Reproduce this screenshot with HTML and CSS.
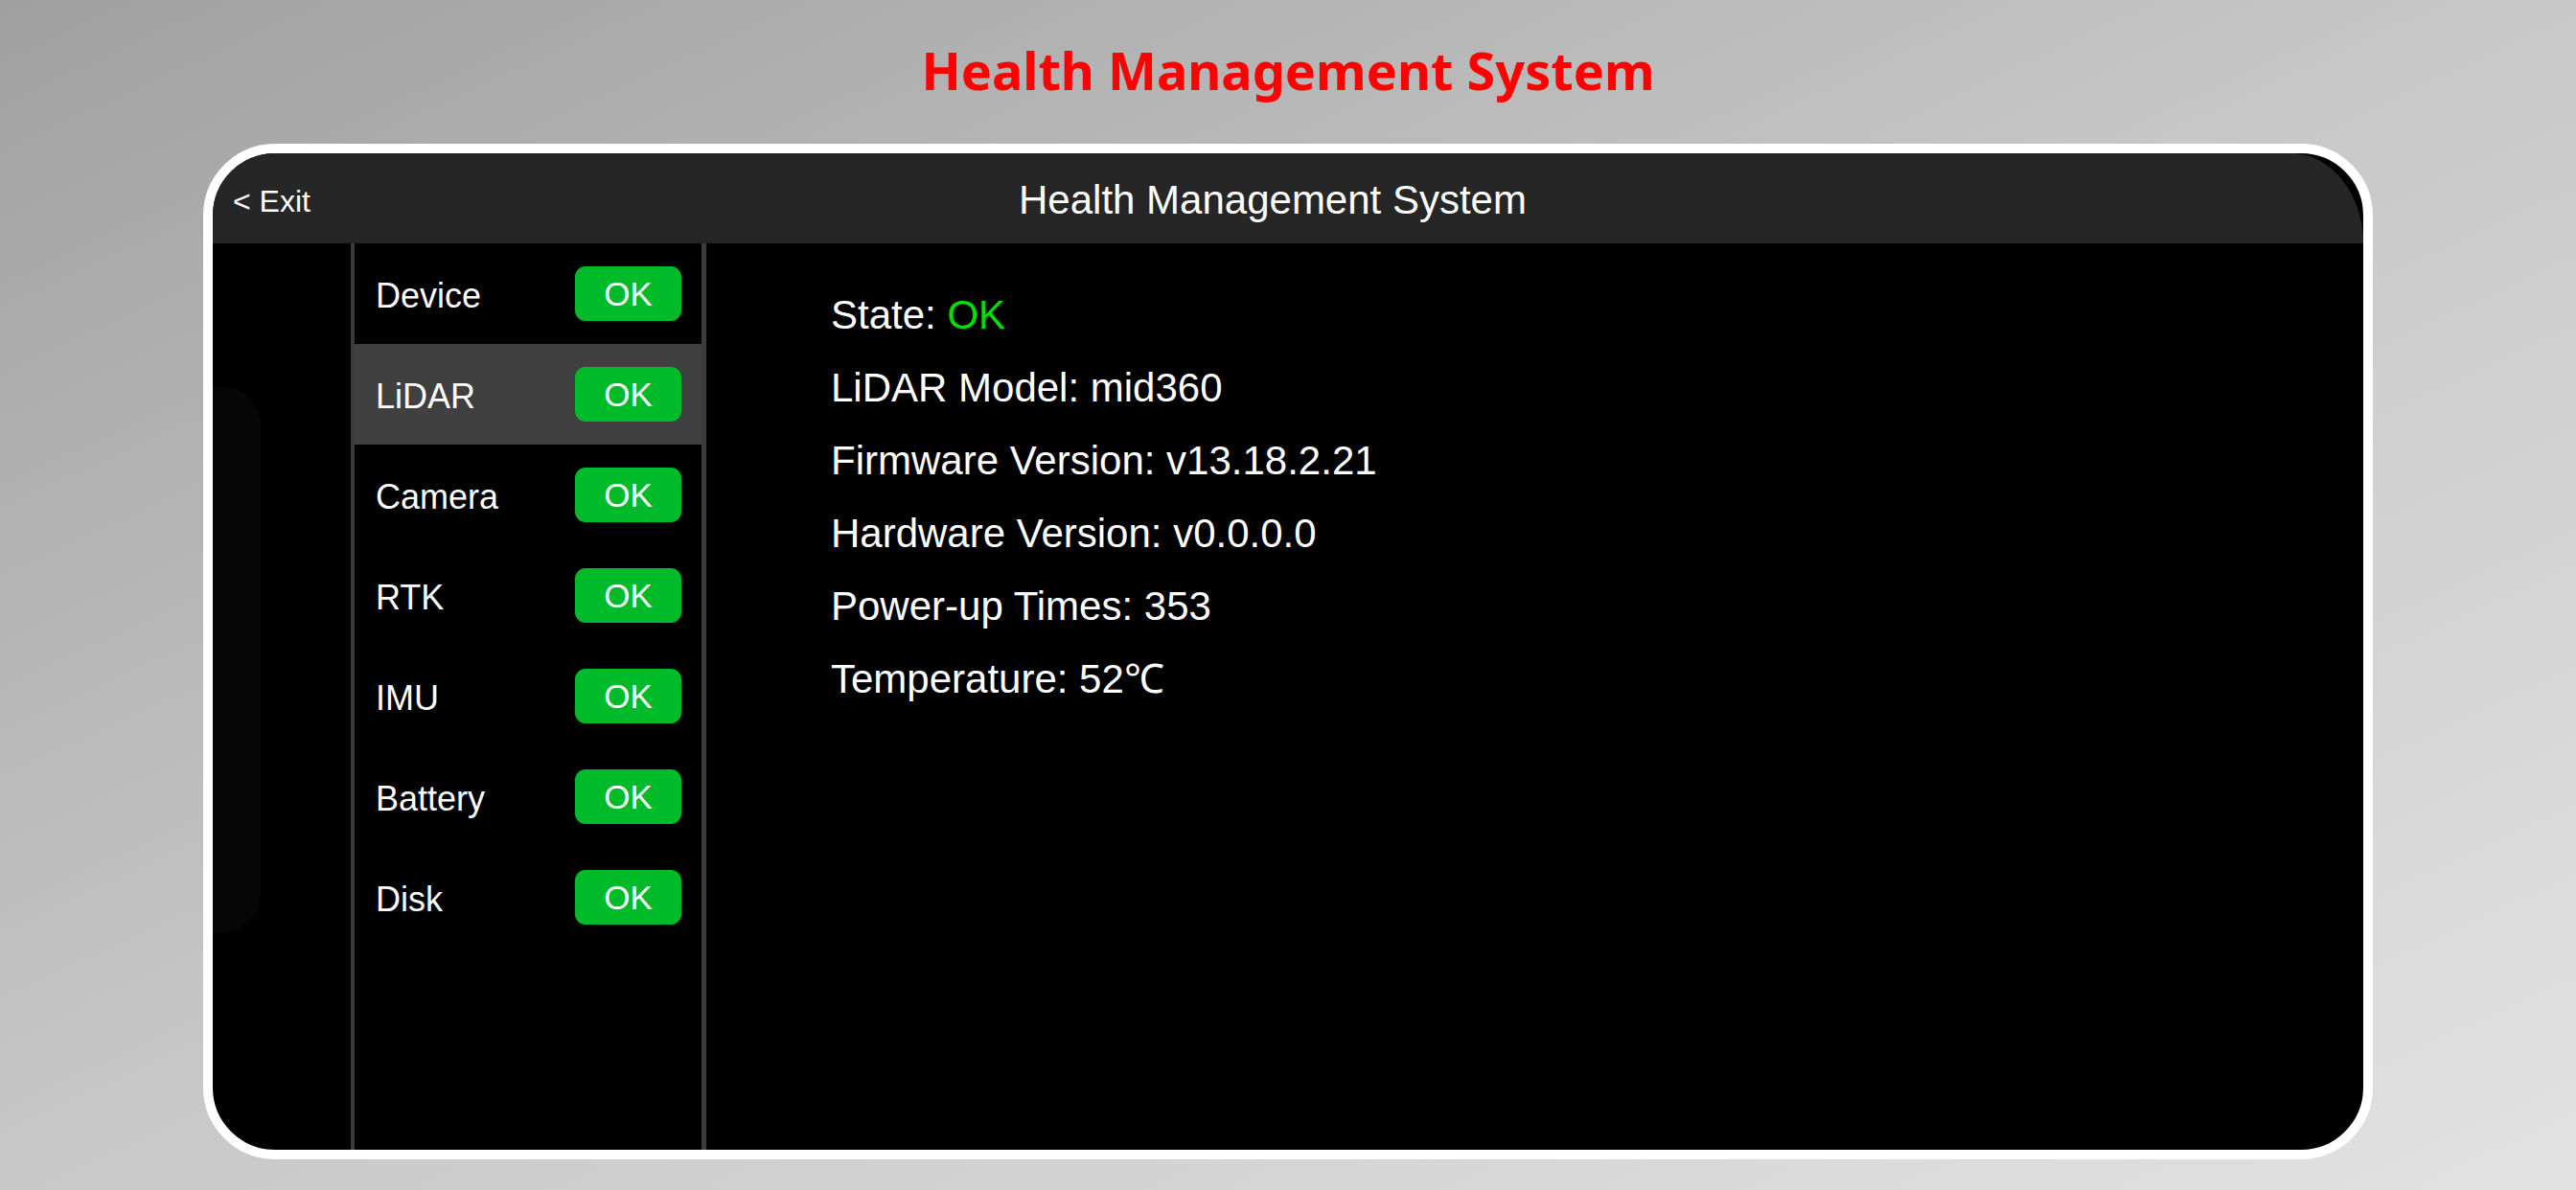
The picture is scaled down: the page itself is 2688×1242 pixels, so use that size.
FILE: index.html
```html
<!DOCTYPE html>
<html lang="en">
  <head>
    <meta charset="UTF-8" />
    <meta name="viewport" content="width=device-width, initial-scale=1.0" />
    <title>Health Management System</title>
    <link rel="stylesheet" href="styles.css">
  </head>
  <body>
    <h1 class="page-title">Health Management System</h1>

    <div class="device">
      <div class="topbar">
        <span class="exit">&lt; Exit</span>
        <span class="topbar-title">Health Management System</span>
      </div>

      <div class="screen">
        <div class="edge-shade"></div>
        <div class="gutter"></div>

        <ul class="modules">
          <li class="module"><span>Device</span><span class="badge">OK</span></li>
          <li class="module active"><span>LiDAR</span><span class="badge">OK</span></li>
          <li class="module"><span>Camera</span><span class="badge">OK</span></li>
          <li class="module"><span>RTK</span><span class="badge">OK</span></li>
          <li class="module"><span>IMU</span><span class="badge">OK</span></li>
          <li class="module"><span>Battery</span><span class="badge">OK</span></li>
          <li class="module"><span>Disk</span><span class="badge">OK</span></li>
        </ul>

        <div class="details">
          <p>State: <span class="ok">OK</span></p>
          <p>LiDAR Model: mid360</p>
          <p>Firmware Version: v13.18.2.21</p>
          <p>Hardware Version: v0.0.0.0</p>
          <p>Power-up Times: 353</p>
          <p>Temperature: 52℃</p>
        </div>
      </div>
    </div>
  </body>
</html>
```

FILE: styles.css
```css
* {
  margin: 0;
  padding: 0;
  box-sizing: border-box;
}

body {
  width: 2688px;
  height: 1242px;
  overflow: hidden;
  font-family: "Liberation Sans", Arial, sans-serif;
  background: linear-gradient(to bottom right, #a0a0a0 0%, #c8c8c8 50%, #e2e2e2 100%);
}

.page-title {
  height: 150px;
  padding-top: 38px;
  text-align: center;
  font-family: "Noto Sans", "Open Sans", sans-serif;
  font-size: 54px;
  line-height: 70px;
  font-weight: 700;
  color: #ff0000;
}

.device {
  width: 2264px;
  height: 1060px;
  margin: 0 auto;
  border: 10px solid #ffffff;
  border-radius: 75px;
  background: #000;
  overflow: hidden;
  display: flex;
  flex-direction: column;
}

.topbar {
  height: 94px;
  flex-shrink: 0;
  display: flex;
  align-items: center;
  position: relative;
  padding-top: 4px;
  background: #262626;
  border-top-right-radius: 80px 100px;
  color: #fff;
}

.exit {
  position: absolute;
  left: 21px;
  top: 32px;
  font-size: 32px;
  line-height: 36px;
}

.topbar-title {
  flex: 1;
  text-align: center;
  padding-right: 32px;
  font-size: 42px;
}

.screen {
  flex: 1;
  display: flex;
  position: relative;
}

.edge-shade {
  position: absolute;
  left: 0;
  top: 150px;
  width: 50px;
  height: 570px;
  background: #060606;
  border-radius: 0 40px 40px 0;
}

.gutter {
  width: 144px;
  flex-shrink: 0;
}

.modules {
  list-style: none;
  width: 371px;
  flex-shrink: 0;
  border-left: 4px solid #3c3c3c;
  border-right: 5px solid #3c3c3c;
}

.module {
  height: 105px;
  padding: 0 21px 0 22px;
  display: flex;
  align-items: center;
  justify-content: space-between;
  color: #fff;
  font-size: 36px;
}

.module > span:first-child {
  padding-top: 4px;
}

.module.active {
  background: #404040;
}

.badge {
  width: 111px;
  height: 57px;
  border-radius: 11px;
  background: #00bb29;
  display: flex;
  align-items: center;
  justify-content: center;
  font-size: 35px;
}

.details {
  flex: 1;
  padding: 37px 0 0 130px;
  color: #fff;
  font-size: 42px;
  line-height: 76px;
}

.details .ok {
  color: #00e000;
}
```
